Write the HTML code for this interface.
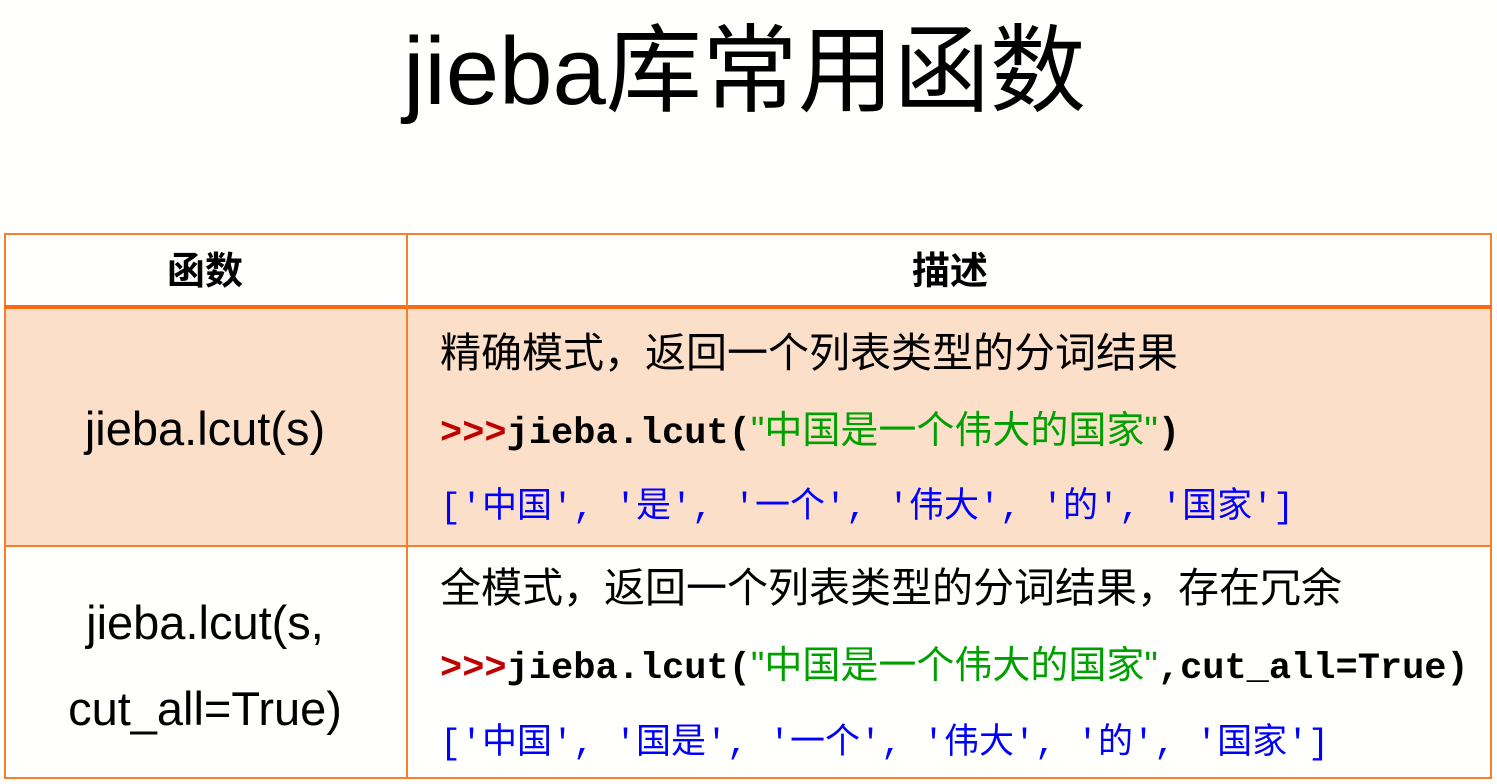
<!DOCTYPE html>
<html><head><meta charset="utf-8"><style>
body{margin:0;width:1497px;height:784px;background:#fffffd;position:relative;overflow:hidden;font-family:"Liberation Sans","Noto Sans CJK SC",sans-serif;}
.a{position:absolute;white-space:nowrap;line-height:1;}
.t{left:0;width:1497px;text-align:center;top:24px;font-size:96px;color:#000;}
.box{position:absolute;left:4px;top:233px;width:1488px;height:546px;border:2px solid #f97e2c;box-sizing:border-box;}
.r1{position:absolute;left:4px;top:308px;width:1488px;height:238px;background:#fcdfc8;}
.h{position:absolute;left:4px;top:305px;width:1488px;height:4px;background:#f96b10;}
.hl{position:absolute;left:4px;top:545px;width:1488px;height:2px;background:#f97e2c;}
.v{position:absolute;left:406px;top:233px;width:2px;height:546px;background:#f97e2c;}
.hd{font-size:38px;font-weight:bold;}
.d{font-size:41px;left:440px;}
.c{font-family:"Liberation Mono","Noto Sans CJK SC",monospace;font-weight:bold;font-size:37px;left:440px;}
.c .p{color:#c00000}.c .s{color:#00a000;font-family:"Liberation Sans","Noto Sans CJK SC",sans-serif;font-weight:normal;font-size:38px;}
.l{color:#0000ff;font-size:35px;left:440px;font-family:"Liberation Mono","Noto Sans CJK SC",monospace;}
.f{font-size:47px;text-align:center;left:4px;width:402px;}
</style></head><body>
<div class="a t" style="left:-4px">jieba库常用函数</div>
<div class="r1"></div>
<div class="box"></div>
<div class="h"></div><div class="hl"></div><div class="v"></div>
<div class="a hd" style="left:4px;width:402px;text-align:center;top:253px">函数</div>
<div class="a hd" style="left:408px;width:1084px;text-align:center;top:253px">描述</div>
<div class="a f" style="top:405px">jieba.lcut(s)</div>
<div class="a f" style="top:599px">jieba.lcut(s,</div>
<div class="a f" style="top:685px">cut_all=True)</div>
<div class="a d" style="top:333px">精确模式，返回一个列表类型的分词结果</div>
<div class="a c" style="top:412px"><span class="p">&gt;&gt;&gt;</span>jieba.lcut(<span class="s">"中国是一个伟大的国家"</span>)</div>
<div class="a l" style="top:491px">['中国', '是', '一个', '伟大', '的', '国家']</div>
<div class="a d" style="top:568px">全模式，返回一个列表类型的分词结果，存在冗余</div>
<div class="a c" style="top:647px"><span class="p">&gt;&gt;&gt;</span>jieba.lcut(<span class="s">"中国是一个伟大的国家"</span>,cut_all=True)</div>
<div class="a l" style="top:727px">['中国', '国是', '一个', '伟大', '的', '国家']</div>
</body></html>
